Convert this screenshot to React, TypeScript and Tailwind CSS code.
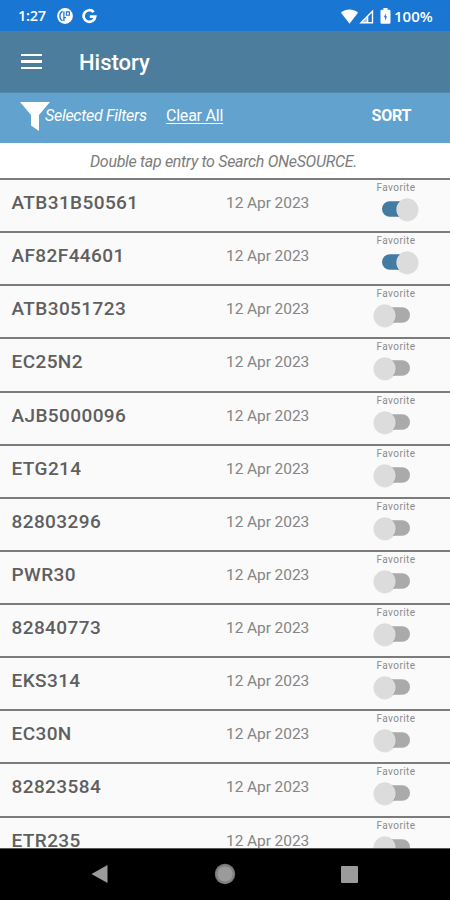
interface Entry {
  part: string;
  date: string;
  favorite: boolean;
}

const entries: Entry[] = [
  { part: "ATB31B50561", date: "12 Apr 2023", favorite: true },
  { part: "AF82F44601", date: "12 Apr 2023", favorite: true },
  { part: "ATB3051723", date: "12 Apr 2023", favorite: false },
  { part: "EC25N2", date: "12 Apr 2023", favorite: false },
  { part: "AJB5000096", date: "12 Apr 2023", favorite: false },
  { part: "ETG214", date: "12 Apr 2023", favorite: false },
  { part: "82803296", date: "12 Apr 2023", favorite: false },
  { part: "PWR30", date: "12 Apr 2023", favorite: false },
  { part: "82840773", date: "12 Apr 2023", favorite: false },
  { part: "EKS314", date: "12 Apr 2023", favorite: false },
  { part: "EC30N", date: "12 Apr 2023", favorite: false },
  { part: "82823584", date: "12 Apr 2023", favorite: false },
  { part: "ETR235", date: "12 Apr 2023", favorite: false },
];

function StatusBar() {
  return (
    <div className="flex h-[31px] shrink-0 items-center bg-[#1976d2] pt-px pr-[17px] pl-[18px] text-white">
      <span className="w-[39px] font-['Open_Sans',sans-serif] text-[14.5px] leading-none font-semibold tracking-[-0.3px]">
        1:27
      </span>
      <svg className="h-4 w-4" viewBox="0 0 16 16">
        <circle cx="8" cy="8" r="7.9" fill="#fff" />
        <path
          d="M5.6 3.3Q2.9 4.6 2.9 8T5.6 12.7M6.9 3.4V12.9M6.9 9.6H9"
          fill="none"
          stroke="#1976d2"
          strokeWidth="1.3"
        />
        <path d="M9.4 3.9H12.4V7.3H9.4Z" fill="none" stroke="#1976d2" strokeWidth="1.1" />
      </svg>
      <svg className="ml-[9px] h-4 w-[15px]" viewBox="0 0 15 16">
        <path
          d="M11.7 4.1A5.8 5.8 0 1 0 13.2 8.6H7.8"
          fill="none"
          stroke="#fff"
          strokeWidth="2.7"
        />
      </svg>
      <svg className="ml-auto h-[15px] w-[17px]" viewBox="0 0 17 15">
        <path d="M0 3.8C4.8-.6 12.2-.6 17 3.8L8.5 14.8Z" fill="#fff" />
      </svg>
      <svg className="ml-px h-[15px] w-[15px]" viewBox="0 0 15 15">
        <path
          d="M2 13.7H13.5V2.2ZM8.6 7.1V13.7"
          fill="none"
          stroke="#fff"
          strokeWidth="1.4"
        />
        <path d="M1.2 14.1L8.6 6.8V14.1Z" fill="#fff" fillOpacity="0.6" />
      </svg>
      <svg className="ml-[6px] h-4 w-[11px]" viewBox="0 0 11 16">
        <path
          d="M3.4 0h4.2v1.7h1.6q1.3 0 1.3 1.3v11.5q0 1.3-1.3 1.3H1.8Q.5 15.8.5 14.5V3q0-1.3 1.3-1.3h1.6Z"
          fill="#fff"
        />
        <path d="M5.8 5.2L3.9 9.2h1.3v3.2l2-4H5.8Z" fill="#1976d2" />
      </svg>
      <span className="ml-[3px] w-[39px] font-['Open_Sans',sans-serif] text-[15px] leading-none font-semibold whitespace-nowrap">
        100%
      </span>
    </div>
  );
}

function AppBar() {
  return (
    <div className="flex h-[61px] shrink-0 items-center bg-[#4c7d9c] pl-[21px] text-white">
      <button className="flex w-[21px] flex-col gap-[4px]" title="Menu">
        <span className="h-[2.5px] bg-white" />
        <span className="h-[2.5px] bg-white" />
        <span className="h-[2.5px] bg-white" />
      </button>
      <h1 className="ml-[37px] pt-[2px] text-[22px] leading-none font-medium">History</h1>
    </div>
  );
}

function FilterBar() {
  return (
    <div className="flex h-[51px] shrink-0 items-center border-t border-[#5289ae] bg-[#62a2ce] pr-[39px] pb-[4px] pl-[20px] text-white">
      <svg className="h-[29px] w-[30px] shrink-0" viewBox="0 0 30 29">
        <path d="M0 0H30L19 13V29L11 23.5V13Z" fill="#fff" />
      </svg>
      <span className="-ml-[5px] w-[121px] text-[16px] leading-none tracking-[-0.28px] whitespace-nowrap italic">
        Selected Filters
      </span>
      <button className="text-[16px] leading-none tracking-[-0.22px] underline underline-offset-2">
        Clear All
      </button>
      <button className="ml-auto text-[16px] leading-none font-bold tracking-[-0.3px]">SORT</button>
    </div>
  );
}

function FavoriteSwitch({ on }: { on: boolean }) {
  return (
    <svg className="mt-px h-7 w-[54px]" viewBox="0 0 54 28">
      <rect
        x={on ? 13 : 10}
        y="6.3"
        width="31"
        height="15.5"
        rx="7.75"
        fill={on ? "#427ca2" : "#aaaaaa"}
      />
      <circle cx={on ? 38.2 : 15.8} cy="15" r="11.4" fill="#000" opacity="0.1" />
      <circle cx={on ? 38.2 : 15.8} cy="14.5" r="10.9" fill="#dcdcdc" />
    </svg>
  );
}

function HistoryRow({ entry }: { entry: Entry }) {
  return (
    <div className="flex h-[53.125px] shrink-0 border-t-2 border-[#7c7c7c]">
      <span className="w-[214px] pt-[12px] pl-[11.5px] text-[19px] leading-[22px] font-medium tracking-[0.4px] text-[#5f5f5f]">
        {entry.part}
      </span>
      <span className="w-[155px] pt-[13px] pl-[12px] text-[15.5px] leading-[20px] tracking-[-0.08px] text-[#858585]">
        {entry.date}
      </span>
      <div className="flex w-[54px] flex-col items-center">
        <span className="pt-[2px] text-[10px] leading-[12px] tracking-[0.4px] text-[#8c8c8c]">
          Favorite
        </span>
        <FavoriteSwitch on={entry.favorite} />
      </div>
    </div>
  );
}

function NavBar() {
  return (
    <div className="flex h-[52px] shrink-0 items-center justify-between border-t border-[#555] bg-black pr-[92px] pb-px pl-[91px]">
      <svg className="h-[18px] w-[17px]" viewBox="0 0 17 18">
        <path d="M16.5 0V18L.5 9Z" fill="#9b9b9b" />
      </svg>
      <svg className="h-[22px] w-[22px]" viewBox="0 0 22 22">
        <circle cx="11" cy="11" r="9.6" fill="#9b9b9b" stroke="#777" strokeWidth="1.2" />
        <circle cx="11" cy="11" r="8.2" fill="none" stroke="#6e6e6e" strokeWidth="0.8" />
      </svg>
      <span className="h-[17px] w-[17px] rounded-[1px] bg-[#9b9b9b]" />
    </div>
  );
}

export default function App() {
  return (
    <div className="flex h-[900px] w-[450px] flex-col overflow-hidden bg-[#fafafa] font-[Roboto,sans-serif]">
      <StatusBar />
      <AppBar />
      <FilterBar />
      <p className="h-[35px] shrink-0 bg-white pt-[9px] pl-[90px] text-[16px] leading-[19px] tracking-[-0.32px] whitespace-nowrap text-[#7c7c7c] italic">
        Double tap entry to Search ONeSOURCE.
      </p>
      <div className="flex min-h-0 flex-1 flex-col overflow-hidden">
        {entries.map((entry) => (
          <HistoryRow key={entry.part} entry={entry} />
        ))}
      </div>
      <NavBar />
    </div>
  );
}
